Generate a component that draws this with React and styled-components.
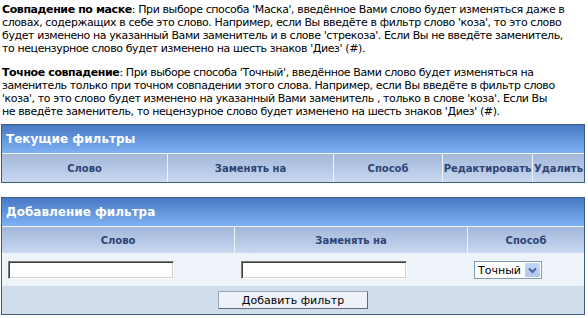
import React from 'react';
import styled, { createGlobalStyle } from 'styled-components';

const Global = createGlobalStyle`
  html, body { margin: 0; padding: 0; background: #fff; }
  body { font-family: "DejaVu Sans", Verdana, sans-serif; }
`;

const Page = styled.div`
  width: 588px;
  height: 318px;
  overflow: hidden;
  box-sizing: border-box;
  padding: 3px 3px 0 1px;
`;

const Note = styled.p`
  margin: 0 0 ${p => p.$gap}px 1px;
  font-size: 11px;
  line-height: 13px;
  letter-spacing: -0.4px;
  color: #000;
`;

const Line = styled.span`
  display: block;
  white-space: nowrap;
`;

const Term = styled.b`
  font-weight: bold;
`;

const Panel = styled.div`
  border: 1px solid #3f5c84;
  background: #eef3fa;
  margin-bottom: ${p => p.$mb || 0}px;
`;

const PanelTitle = styled.div`
  height: 28px;
  display: flex;
  align-items: center;
  padding-left: 4px;
  background: linear-gradient(#4878c4, #7eb2f3);
  color: #fff;
  font-weight: bold;
  font-size: 12px;
  white-space: nowrap;
`;

const Grid = styled.div`
  display: grid;
  grid-template-columns: ${p => p.$cols};
  gap: 1px;
  padding-top: 1px;
`;

const HeadCell = styled.div`
  height: ${p => p.$h}px;
  display: flex;
  align-items: center;
  justify-content: center;
  background: linear-gradient(#a2b7db, #c8d8ef);
  color: #2c4575;
  font-weight: bold;
  font-size: 10px;
  white-space: nowrap;
  overflow: hidden;
`;

const FieldCell = styled.div`
  height: 31px;
  display: flex;
  align-items: center;
  padding: 0 6px;
  background: #eef2f9;
`;

const ActionRow = styled.div`
  grid-column: 1 / -1;
  height: 28px;
  display: flex;
  align-items: center;
  justify-content: center;
  background: #d2ddec;
`;

const TextInput = styled.input`
  width: 166px;
  height: 18px;
  box-sizing: border-box;
  margin: 0;
  padding: 0 2px;
  background: #fff;
  border: 1px solid;
  border-color: #7a7a7a #ffffff #ffffff #7a7a7a;
  box-shadow: inset 1px 1px 0 #404040, inset -1px -1px 0 #d4d0c8;
  font-family: "DejaVu Sans", Verdana, sans-serif;
  font-size: 11px;
  outline: none;
`;

const SelectBox = styled.div`
  width: 68px;
  height: 18px;
  box-sizing: border-box;
  display: flex;
  align-items: stretch;
  border: 1px solid #7f9db9;
  background: #fff;
  margin-top: 1px;
`;

const SelectField = styled.select`
  appearance: none;
  -webkit-appearance: none;
  flex: 1;
  min-width: 0;
  border: none;
  margin: 0;
  padding: 0 0 0 3px;
  background: transparent;
  font-family: "DejaVu Sans", Verdana, sans-serif;
  font-size: 11px;
  color: #000;
  outline: none;
`;

const SelectArrow = styled.span`
  width: 15px;
  margin: 1px;
  display: flex;
  align-items: center;
  justify-content: center;
  background: linear-gradient(#c6d6fa, #b1c6ef);
  border-radius: 1px;
`;

const Button = styled.button`
  width: 150px;
  height: 18px;
  margin: 0;
  padding: 0;
  box-sizing: border-box;
  border: 1px solid;
  border-color: #9aa4b4 #5f6b7c #5f6b7c #9aa4b4;
  background: #eef1f7;
  font-family: "DejaVu Sans", Verdana, sans-serif;
  font-size: 11px;
  color: #000;
`;

const Chevron = () => (
  <svg width="9" height="7" viewBox="0 0 9 7">
    <path d="M1 1.5 L4.5 5 L8 1.5" fill="none" stroke="#4a64a0" strokeWidth="2" />
  </svg>
);

export default function App() {
  return (
    <>
      <Global />
      <Page>
        <Note $gap={11}>
          <Line><Term>Совпадение по маске</Term>: При выборе способа 'Маска', введённое Вами слово будет изменяться даже в</Line>
          <Line>словах, содержащих в себе это слово. Например, если Вы введёте в фильтр слово 'коза', то это слово</Line>
          <Line>будет изменено на указанный Вами заменитель и в слове 'стрекоза'. Если Вы не введёте заменитель,</Line>
          <Line>то нецензурное слово будет изменено на шесть знаков 'Диез' (#).</Line>
        </Note>
        <Note $gap={6}>
          <Line><Term>Точное совпадение</Term>: При выборе способа 'Точный', введённое Вами слово будет изменяться на</Line>
          <Line>заменитель только при точном совпадении этого слова. Например, если Вы введёте в фильтр слово</Line>
          <Line>'коза', то это слово будет изменено на указанный Вами заменитель , только в слове 'коза'. Если Вы</Line>
          <Line>не введёте заменитель, то нецензурное слово будет изменено на шесть знаков 'Диез' (#).</Line>
        </Note>

        <Panel $mb={14}>
          <PanelTitle>Текущие фильтры</PanelTitle>
          <Grid $cols="165px 165px 108px 89px 51px">
            <HeadCell $h={28}>Слово</HeadCell>
            <HeadCell $h={28}>Заменять на</HeadCell>
            <HeadCell $h={28}>Способ</HeadCell>
            <HeadCell $h={28}>Редактировать</HeadCell>
            <HeadCell $h={28}>Удалить</HeadCell>
          </Grid>
        </Panel>

        <Panel>
          <PanelTitle>Добавление фильтра</PanelTitle>
          <Grid $cols="232px 232px 116px">
            <HeadCell $h={26}>Слово</HeadCell>
            <HeadCell $h={26}>Заменять на</HeadCell>
            <HeadCell $h={26}>Способ</HeadCell>
            <FieldCell><TextInput type="text" /></FieldCell>
            <FieldCell><TextInput type="text" /></FieldCell>
            <FieldCell>
              <SelectBox>
                <SelectField defaultValue="exact">
                  <option value="exact">Точный</option>
                  <option value="mask">Маска</option>
                </SelectField>
                <SelectArrow><Chevron /></SelectArrow>
              </SelectBox>
            </FieldCell>
            <ActionRow><Button type="button">Добавить фильтр</Button></ActionRow>
          </Grid>
        </Panel>
      </Page>
    </>
  );
}
